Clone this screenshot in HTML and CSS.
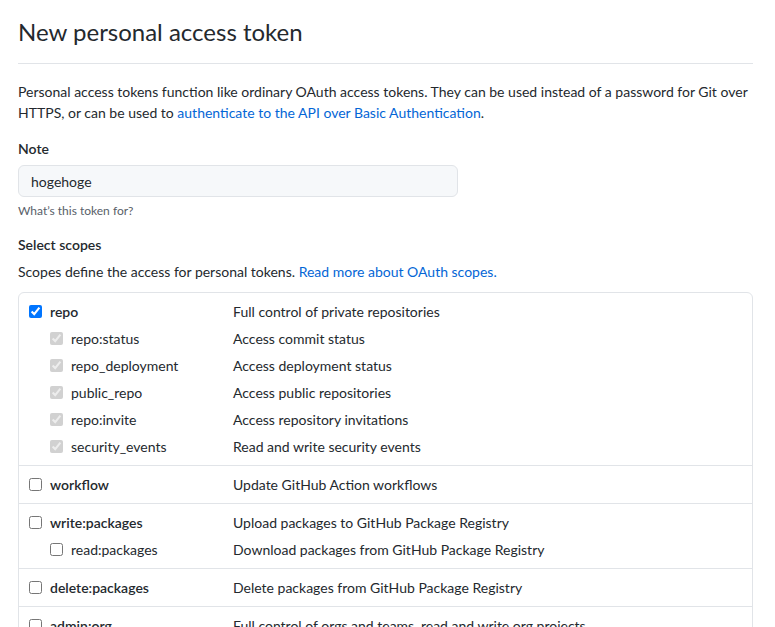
FILE: index.html
```html
<!DOCTYPE html>
<html lang="en">
<head>
<meta charset="utf-8">
<title>New personal access token</title>
<link rel="stylesheet" href="styles.css">
</head>
<body>
<div class="page">
  <div class="subhead">
    <h1 class="subhead-title">New personal access token</h1>
  </div>
  <p class="intro">Personal access tokens function like ordinary OAuth access tokens. They can be used instead of a password for Git over HTTPS, or can be used to <a href="#">authenticate to the API over Basic Authentication</a>.</p>

  <div class="form-group">
    <label class="label" for="note">Note</label>
    <input class="input" id="note" type="text" value="hogehoge">
    <p class="note">What’s this token for?</p>
  </div>

  <div class="form-group scopes-group">
    <div class="label">Select scopes</div>
    <p class="scopes-desc">Scopes define the access for personal tokens. <a href="#">Read more about OAuth scopes.</a></p>

    <div class="scopes">
      <div class="scope-group">
        <label class="row top"><span class="name"><input type="checkbox" checked><b>repo</b></span><span class="desc">Full control of private repositories</span></label>
        <label class="row sub"><span class="name"><input type="checkbox" checked disabled>repo:status</span><span class="desc">Access commit status</span></label>
        <label class="row sub"><span class="name"><input type="checkbox" checked disabled>repo_deployment</span><span class="desc">Access deployment status</span></label>
        <label class="row sub"><span class="name"><input type="checkbox" checked disabled>public_repo</span><span class="desc">Access public repositories</span></label>
        <label class="row sub"><span class="name"><input type="checkbox" checked disabled>repo:invite</span><span class="desc">Access repository invitations</span></label>
        <label class="row sub"><span class="name"><input type="checkbox" checked disabled>security_events</span><span class="desc">Read and write security events</span></label>
      </div>
      <div class="scope-group">
        <label class="row top"><span class="name"><input type="checkbox"><b>workflow</b></span><span class="desc">Update GitHub Action workflows</span></label>
      </div>
      <div class="scope-group">
        <label class="row top"><span class="name"><input type="checkbox"><b>write:packages</b></span><span class="desc">Upload packages to GitHub Package Registry</span></label>
        <label class="row sub"><span class="name"><input type="checkbox">read:packages</span><span class="desc">Download packages from GitHub Package Registry</span></label>
      </div>
      <div class="scope-group">
        <label class="row top"><span class="name"><input type="checkbox"><b>delete:packages</b></span><span class="desc">Delete packages from GitHub Package Registry</span></label>
      </div>
      <div class="scope-group">
        <label class="row top"><span class="name"><input type="checkbox"><b>admin:org</b></span><span class="desc">Full control of orgs and teams, read and write org projects</span></label>
      </div>
    </div>
  </div>
</div>
</body>
</html>
```

FILE: styles.css
```css
* { box-sizing: border-box; }

html, body {
  margin: 0;
  background: #fff;
}

body {
  font-family: Lato, "Noto Sans", sans-serif;
  font-size: 14px;
  line-height: 21px;
  color: #24292e;
}

a {
  color: #0366d6;
  text-decoration: none;
}

.page {
  padding: 0 22px 0 18px;
}

.subhead {
  padding-top: 14px;
  padding-bottom: 13px;
  border-bottom: 1px solid #e1e4e8;
}

.subhead-title {
  margin: 0;
  font-size: 24px;
  font-weight: 400;
  line-height: 36px;
}

.intro {
  margin: 17px 0 0;
}

.form-group {
  margin-top: 15px;
}

.label {
  display: block;
  font-weight: 600;
  margin-bottom: 6px;
}

.input {
  display: block;
  width: 440px;
  height: 32px;
  padding: 0 12px;
  font: inherit;
  color: #24292e;
  background: #f6f8fa;
  border: 1px solid #e1e4e8;
  border-radius: 6px;
  outline: none;
}

.note {
  margin: 5px 0 0;
  font-size: 12px;
  line-height: 18px;
  color: #586069;
}

.scopes-group {
  margin-top: 14px;
}

.scopes-group .label {
  margin-bottom: 6px;
}

.scopes-desc {
  margin: 0 0 10px;
}

.scopes {
  border: 1px solid #e1e4e8;
  border-radius: 6px;
}

.scope-group {
  padding: 5px 0;
  border-top: 1px solid #e1e4e8;
}

.scope-group:first-child {
  border-top: 0;
}

.row {
  display: flex;
  align-items: center;
  height: 27px;
}

.name {
  display: flex;
  align-items: center;
  width: 214px;
  flex: none;
}

.row.top .name { padding-left: 10px; }
.row.sub .name { padding-left: 31px; }

.name input {
  width: 13px;
  height: 13px;
  margin: 0 8px 0 0;
  accent-color: #0075ff;
}

.name b { font-weight: 600; }

.desc {
  color: #24292e;
}
```
